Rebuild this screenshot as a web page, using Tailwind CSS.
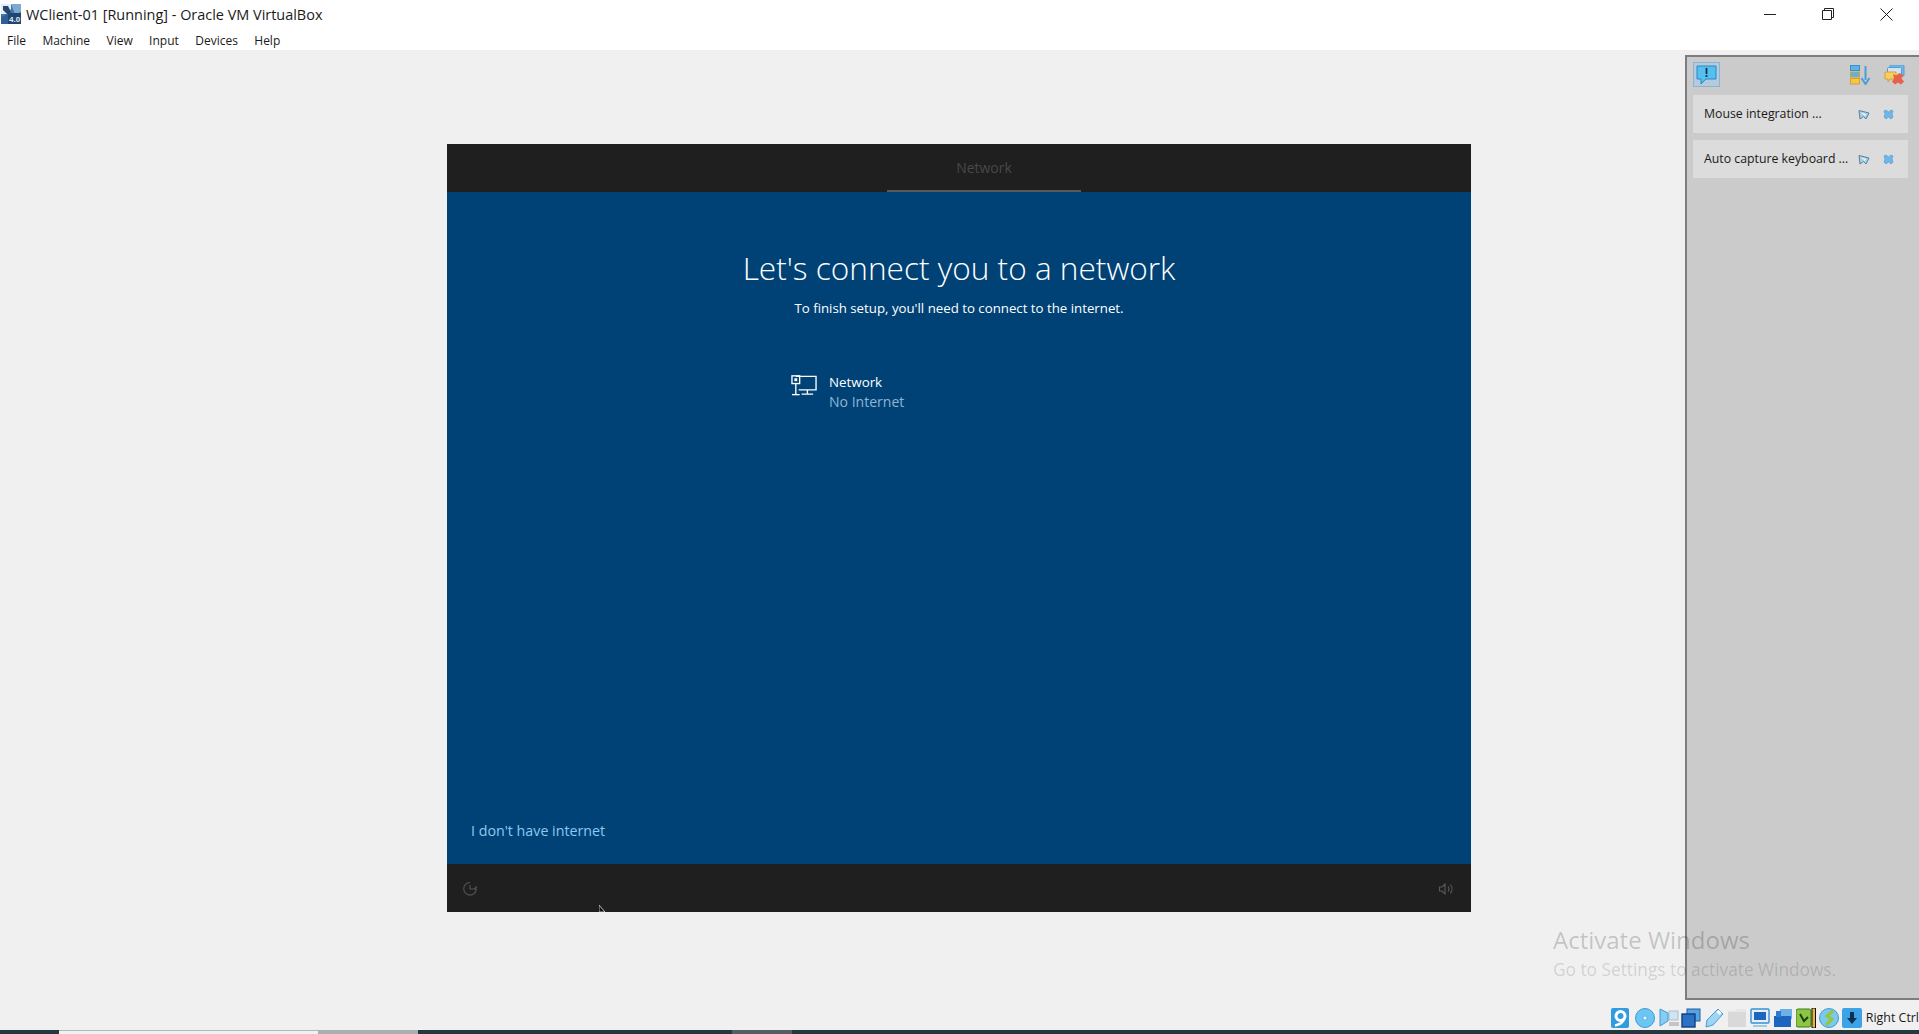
<!DOCTYPE html>
<html lang="en">
<head>
  <meta charset="UTF-8" />
  <title>WClient-01 [Running] - Oracle VM VirtualBox</title>
  <script src="https://cdn.jsdelivr.net/npm/@tailwindcss/browser@4"></script>
</head>
<body class="bg-[#f0f0f0] font-['Open_Sans',sans-serif] overflow-hidden">
<div class="relative flex flex-col w-[1919px] h-[1034px] overflow-hidden">

  <!-- Title bar -->
  <header class="bg-white h-[28px] flex items-center shrink-0">
    <svg class="ml-[1px] w-[20px] h-[20px]" viewBox="0 0 20 20">
      <rect width="20" height="20" fill="#3f78ad"/>
      <path d="M0 0h10v5l-3 5H0z" fill="#e4ecf4"/>
      <path d="M2 2h5l3 6-3 3-5-5z" fill="#24466f"/>
      <path d="M10 0h10v8l-6 2z" fill="#7fa9cf"/>
      <path d="M0 13l7-3 3 10H0z" fill="#2f5f92"/>
      <rect x="7" y="9" width="13" height="11" fill="#1e4672"/>
      <text x="8" y="18" font-size="8" font-weight="700" fill="#e6eef6" font-family="'Liberation Sans',sans-serif">4.0</text>
    </svg>
    <span class="ml-[5px] pt-[1px] text-[#1a1a1a] text-[14.45px]">WClient-01 [Running] - Oracle VM VirtualBox</span>
    <div class="ml-auto flex items-center h-full mr-[3px]">
      <button class="w-[58.5px] h-full flex items-center justify-center">
        <svg class="w-[12px] h-[12px]" viewBox="0 0 12 12"><path d="M0 6.5h12" stroke="#222" fill="none"/></svg>
      </button>
      <button class="w-[58.5px] h-full flex items-center justify-center">
        <svg class="w-[12px] h-[12px]" viewBox="0 0 12 12"><path d="M.5 2.5h9v9h-9zM2.5 2.5v-2h9v9h-2" stroke="#222" fill="none"/></svg>
      </button>
      <button class="w-[58.5px] h-full flex items-center justify-center">
        <svg class="w-[13px] h-[13px]" viewBox="0 0 13 13"><path d="M.5.5l12 12M12.5.5l-12 12" stroke="#222" fill="none"/></svg>
      </button>
    </div>
  </header>

  <!-- Menu bar -->
  <nav class="bg-white h-[22px] flex items-center pl-[7px] pt-[3px] gap-[16.4px] text-[12px] text-[#1a1a1a] shrink-0">
    <span>File</span><span>Machine</span><span>View</span><span>Input</span><span>Devices</span><span>Help</span>
  </nav>

  <!-- Main area -->
  <main class="flex h-[950px] shrink-0">
    <div class="flex-1 pl-[447px] pt-[94px]">
      <!-- Guest screen -->
      <div class="w-[1024px] h-[768px] flex flex-col bg-[#004275]">
        <div class="h-[48px] bg-[#1f1f1f] pl-[440px] shrink-0">
          <div class="w-[194px] h-full border-b-2 border-[#5a5a5a] flex items-center justify-center pt-[1px]">
            <span class="text-[14px] text-[#484848]">Network</span>
          </div>
        </div>
        <div class="flex-1 flex flex-col items-center pt-[56px] text-white">
          <h1 class="text-[31.6px] font-light leading-[40px]">Let's connect you to a network</h1>
          <p class="mt-[10px] text-[13.25px] leading-[20px]">To finish setup, you'll need to connect to the internet.</p>
          <div class="mt-[54px] flex self-start ml-[344px]">
            <svg class="mt-[2px] w-[26px] h-[22px]" viewBox="0 0 27 22" fill="none" stroke="#fff" stroke-width="1.4">
              <path d="M5 2h21v14H8M17 16v4M11 20.5h12M5 10v11"/>
              <rect x="1" y="1.5" width="8" height="8"/>
              <rect x="3.5" y="4" width="3" height="3" fill="#fff" stroke="none"/>
              <path d="M1 21h8"/>
            </svg>
            <div class="ml-[12px]">
              <div class="text-[13.35px] leading-[20px]">Network</div>
              <div class="text-[14.05px] leading-[20px] text-[#8fb3d6]">No Internet</div>
            </div>
          </div>
          <a class="mt-auto mb-[23px] self-start ml-[24px] text-[14.25px] leading-[20px] text-[#8ec8f2]">I don't have internet</a>
        </div>
        <div class="h-[48px] bg-[#1f1f1f] flex items-center justify-between pl-[15px] pr-[17px] pt-[1px] shrink-0">
          <svg class="w-[17px] h-[17px]" viewBox="0 0 17 17" fill="none" stroke="#555" stroke-width="1.1">
            <path d="M8 2.5A6.3 6.3 0 1 0 14.3 9H8V5M12 9l3-2.5" />
          </svg>
          <svg class="w-[16px] h-[16px]" viewBox="0 0 16 16" fill="none" stroke="#5a5a5a" stroke-width="1.1">
            <path d="M1.5 6h2.5l3-3v10l-3-3H1.5zM10 5.5a4 4 0 0 1 0 5M12.3 3.5a7 7 0 0 1 0 9"/>
          </svg>
        </div>
      </div>
    </div>

    <!-- Notification side panel -->
    <aside class="w-[234px] mt-[5px] bg-[#cbcbcb] border-l-2 border-t-2 border-b-2 border-[#7d7d7d] shrink-0 flex flex-col pl-[6px] pr-[11px] pt-[5px]">
      <div class="flex items-center justify-between h-[25px] mb-[8px]">
        <div class="w-[27px] h-[25px] bg-[#b3cbe0] border border-[#8fb2d0] flex items-center justify-center">
          <svg class="w-[21px] h-[21px]" viewBox="0 0 21 21">
            <path d="M1 2h19v13H10l-5 5v-5H1z" fill="#55c0f0" stroke="#2f85c0"/>
            <path d="M9.6 4h1.8v6H9.6zM9.6 11h1.8v2H9.6z" fill="#15304a"/>
          </svg>
        </div>
        <div class="flex items-center gap-[13px] mr-[3px]">
          <svg class="w-[21px] h-[20px]" viewBox="0 0 21 20">
            <rect x=".5" y=".5" width="9" height="5" fill="#5bb4e8" stroke="#3b8fd0"/>
            <rect x=".5" y="7" width="9" height="5" fill="#5bb4e8" stroke="#d8a030"/>
            <rect x=".5" y="13.5" width="9" height="5.5" fill="#f2c84a" stroke="#d8a030"/>
            <path d="M15.5 1v14" stroke="#4a9ed8" stroke-width="2" fill="none"/>
            <path d="M11.5 13l4 6 4-6" stroke="#4a9ed8" stroke-width="2" fill="none"/>
          </svg>
          <svg class="w-[21px] h-[20px]" viewBox="0 0 21 20">
            <rect x="6" y="0" width="14" height="11" rx="1" fill="#7ab8e4" stroke="#4a9ed8"/>
            <rect x="3.5" y="2.5" width="14" height="10" rx="1" fill="#cfe3f2" stroke="#4a9ed8"/>
            <path d="M1 7h11v7H6l-2 3v-3H1z" fill="#f5cf62" stroke="#d8a030"/>
            <path d="M9 9l3 1.5L15.5 8l4 2-2 3.5 2.5 3-3 3-3-2-3 2-3-3 2-3z" fill="#e8624a"/>
          </svg>
        </div>
      </div>
      <div class="h-[38px] bg-[#dcdcdc] flex items-center pl-[11px] pr-[14px] pt-[1px] text-[12.3px] text-[#1a1a1a] mb-[7px]">
        <span class="flex-1 whitespace-nowrap">Mouse integration ...</span>
        <svg class="w-[12px] h-[12px] mr-[13px]" viewBox="0 0 12 12"><path d="M1 1.5l10 2.5-3 6-2.500-2.500L2 10z" fill="#a9cfe8" stroke="#5a7f9c"/><path d="M3 3.5l5 1.500-1 2z" fill="#eef6fb"/></svg>
        <svg class="w-[11px] h-[11px]" viewBox="0 0 11 11"><path d="M1 2l2-1 2.500 2L8 1l2 1-1 3 1 3-2 2-2.500-2L3 10 1 8l1-3z" fill="#6fb7e8" stroke="#4a96d0" stroke-width=".6"/></svg>
      </div>
      <div class="h-[38px] bg-[#dcdcdc] flex items-center pl-[11px] pr-[14px] pt-[1px] text-[12.3px] text-[#1a1a1a]">
        <span class="flex-1 whitespace-nowrap">Auto capture keyboard ...</span>
        <svg class="w-[12px] h-[12px] mr-[13px]" viewBox="0 0 12 12"><path d="M1 1.5l10 2.5-3 6-2.500-2.500L2 10z" fill="#a9cfe8" stroke="#5a7f9c"/><path d="M3 3.5l5 1.500-1 2z" fill="#eef6fb"/></svg>
        <svg class="w-[11px] h-[11px]" viewBox="0 0 11 11"><path d="M1 2l2-1 2.500 2L8 1l2 1-1 3 1 3-2 2-2.500-2L3 10 1 8l1-3z" fill="#6fb7e8" stroke="#4a96d0" stroke-width=".6"/></svg>
      </div>
    </aside>
  </main>

  <!-- Status bar -->
  <footer class="h-[30px] flex items-center justify-end gap-[3px] shrink-0 pt-[6px] whitespace-nowrap">
    <svg class="w-[18px] h-[20px] mr-[3px]" viewBox="0 0 18 20"><rect width="18" height="20" rx="2" fill="#2f9be0"/><circle cx="9.5" cy="8" r="4.5" fill="none" stroke="#fff" stroke-width="3"/><path d="M13.5 10Q12 16 4 17.5" fill="none" stroke="#fff" stroke-width="2.6"/></svg>
    <svg class="w-[20px] h-[20px] mr-[1px]" viewBox="0 0 20 20"><circle cx="10" cy="10" r="9.5" fill="#6cc6f2" stroke="#3b9ad8"/><circle cx="10" cy="10" r="2" fill="#e8f6fd" stroke="#3b9ad8" stroke-width=".6"/></svg>
    <svg class="w-[21px] h-[20px] mr-[-2px]" viewBox="0 0 21 20"><rect x="10" y="3" width="9" height="9" fill="#cfe3f0" stroke="#a9bfce"/><path d="M10 14h10v4H10z" fill="#c4c4c4"/><path d="M1 1l8 4v8l-8 5z" fill="#87cdf3" stroke="#3b9ad8"/></svg>
    <svg class="w-[20px] h-[20px]" viewBox="0 0 20 20"><rect x="6" y="1" width="13" height="12" fill="#55a5e0" stroke="#1e5fa8"/><rect x="1" y="6" width="13" height="13" fill="#2b72c6" stroke="#123e7d" stroke-width="1.4"/></svg>
    <svg class="w-[20px] h-[20px]" viewBox="0 0 20 20"><path d="M14 1l5 5-10 11-7 2 1-7z" fill="#9ed4f4" stroke="#4a9ad8"/><rect x="13" y="3" width="4" height="3" fill="#fff" transform="rotate(45 15 4.5)"/></svg>
    <svg class="w-[20px] h-[20px]" viewBox="0 0 20 20"><rect x="1" y="3" width="18" height="16" fill="#d9d9d9"/><path d="M1 3h7l2-2h9v3H1z" fill="#e6e6e6"/></svg>
    <svg class="w-[20px] h-[20px]" viewBox="0 0 20 20"><rect x="1" y="1" width="18" height="14" rx="1" fill="#e2f0fa" stroke="#3b8ed0" stroke-width="1.4"/><rect x="4" y="4" width="12" height="8" fill="#1f66bd"/><path d="M3 18h14" stroke="#8fc0e4" stroke-width="1.6"/></svg>
    <svg class="w-[20px] h-[20px]" viewBox="0 0 20 20"><rect x="7" y="1" width="12" height="10" fill="#6cb2e6"/><rect x="1" y="8" width="17" height="11" fill="#1d66bf"/><rect x="3" y="3" width="5" height="6" fill="#2e7cd0"/></svg>
    <svg class="w-[20px] h-[20px]" viewBox="0 0 20 20"><rect x="0" y="1" width="15" height="18" rx="2" fill="#8ec63f" stroke="#3d7a20"/><path d="M4 6l4 7 4-4" fill="none" stroke="#14431c" stroke-width="2"/><rect x="16" y="0" width="3.5" height="20" fill="#e9b640" stroke="#111"/></svg>
    <svg class="w-[20px] h-[20px]" viewBox="0 0 20 20"><circle cx="10" cy="10" r="9.5" fill="#7cc8f0" stroke="#3b9ad8"/><path d="M14 3l-6 5 5 3-6 6" fill="none" stroke="#93c83e" stroke-width="3.2"/></svg>
    <svg class="w-[20px] h-[20px]" viewBox="0 0 20 20"><rect width="20" height="20" rx="2" fill="#3ba3e6"/><path d="M8 4h4v6h3l-5 6-5-6h3z" fill="#10304f"/></svg>
    <span class="text-[12.4px] text-[#1a1a1a] ml-[1px]">Right Ctrl</span>
  </footer>

  <!-- Host taskbar, mostly cut off at the bottom edge -->
  <div class="h-[4px] bg-[#25383f] flex shrink-0">
    <div class="ml-[59px] w-[259px] bg-[#f0f0f0] border-t border-[#b5b5b5]"></div>
    <div class="w-[100px] bg-[#aeaeae]"></div>
    <div class="ml-[314px] w-[60px] bg-[#555f63]"></div>
  </div>

  <!-- Windows watermark lies over both the canvas and the panel -->
  <div class="absolute left-[1553px] top-[924px] whitespace-nowrap pointer-events-none">
    <div class="text-[24px] leading-[32px] text-[#000000]/20">Activate Windows</div>
    <div class="text-[17.3px] leading-[24px] mt-[2px] text-[#000000]/15">Go to Settings to activate Windows.</div>
  </div>

  <!-- Guest mouse pointer -->
  <svg class="absolute left-[599px] top-[905px] w-[8px] h-[7px]" viewBox="0 0 8 7"><path d="M0 0l6 7H0z" fill="#111" stroke="#ddd" stroke-width=".8"/></svg>
</div>
</body>
</html>
